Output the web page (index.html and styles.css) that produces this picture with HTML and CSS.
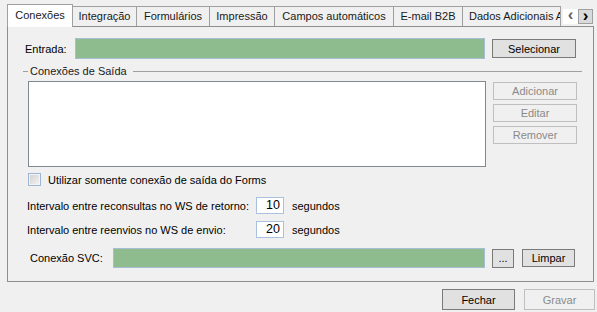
FILE: index.html
```html
<!DOCTYPE html>
<html lang="pt">
<head>
    <meta charset="UTF-8">
    <title>Conexões</title>
    <link rel="stylesheet" href="styles.css">
</head>
<body>
    <div class="window">
        <!-- abas -->
        <div class="tabbar">
            <div class="tab active w-conexoes">Conexões</div>
            <div class="tab w-integracao">Integração</div>
            <div class="tab w-formularios">Formulários</div>
            <div class="tab w-impressao">Impressão</div>
            <div class="tab w-campos">Campos automáticos</div>
            <div class="tab w-email">E-mail B2B</div>
            <div class="tab w-dados">Dados Adicionais A</div>
            <div class="tab-scroll">
                <span class="arrow left">&lsaquo;</span>
                <span class="arrow right">&rsaquo;</span>
            </div>
        </div>

        <div class="panel">
            <div class="row entrada">
                <label class="lbl lbl-entrada">Entrada:</label>
                <div class="field field-entrada"></div>
                <button class="btn btn-side">Selecionar</button>
            </div>

            <div class="group-head">
                <span class="line short"></span>
                <span class="group-title">Conexões de Saída</span>
                <span class="line long"></span>
            </div>

            <div class="row saida">
                <div class="listbox"></div>
                <div class="side-buttons">
                    <button class="btn btn-side disabled">Adicionar</button>
                    <button class="btn btn-side disabled">Editar</button>
                    <button class="btn btn-side disabled">Remover</button>
                </div>
            </div>

            <div class="row check-row">
                <span class="checkbox"></span>
                <span class="check-text">Utilizar somente conexão de saída do Forms</span>
            </div>

            <div class="row interval first">
                <span class="lbl lbl-interval">Intervalo entre reconsultas no WS de retorno:</span>
                <div class="num">10</div>
                <span class="unit">segundos</span>
            </div>
            <div class="row interval">
                <span class="lbl lbl-interval">Intervalo entre reenvios no WS de envio:</span>
                <div class="num">20</div>
                <span class="unit">segundos</span>
            </div>

            <div class="row svc">
                <label class="lbl lbl-svc">Conexão SVC:</label>
                <div class="field field-svc"></div>
                <button class="btn btn-dots">...</button>
                <button class="btn btn-limpar">Limpar</button>
            </div>
        </div>

        <div class="footer">
            <button class="btn btn-footer">Fechar</button>
            <button class="btn btn-footer disabled">Gravar</button>
        </div>
    </div>
</body>
</html>
```

FILE: styles.css
```css
body {
    margin: 0;
    background-color: #f0f0f0;
    font-family: "Liberation Sans", Arial, sans-serif;
    font-size: 11px;
    color: #000;
}

.window {
    width: 597px;
    height: 312px;
    display: flex;
    flex-direction: column;
    overflow: hidden;
}

/* ---- abas ---- */
.tabbar {
    display: flex;
    align-items: flex-end;
    height: 26px;
    padding-left: 7px;
    box-sizing: border-box;
}

.tab {
    box-sizing: border-box;
    height: 20px;
    line-height: 19px;
    text-align: center;
    white-space: nowrap;
    overflow: hidden;
    border: 1px solid #a0a0a0;
    border-left: none;
    border-bottom: none;
    background-color: #f0f0f0;
    color: #1a1a1a;
}

.tab.active {
    position: relative;
    height: 23px;
    line-height: 21px;
    margin-bottom: -1px;
    border-left: 1px solid #a0a0a0;
    background-color: #fff;
    z-index: 1;
}

.w-conexoes { width: 66px; }
.w-integracao { width: 64px; }
.w-formularios { width: 73px; }
.w-impressao { width: 65px; }
.w-campos { width: 119px; }
.w-email { width: 69px; }
.w-dados { width: 98px; text-align: left; padding-left: 6px; }

.tab-scroll {
    display: flex;
    margin-left: 2px;
    margin-bottom: 2px;
}

.arrow {
    box-sizing: border-box;
    width: 15px;
    height: 15px;
    line-height: 12px;
    text-align: center;
    font-size: 17px;
    font-weight: bold;
}

.arrow.left {
    background-color: #fff;
    color: #606060;
}

.arrow.right {
    background-color: #dadada;
    border: 1px solid #a0a0a0;
    color: #000;
}

/* ---- painel ---- */
.panel {
    box-sizing: border-box;
    margin-left: 7px;
    width: 587px;
    height: 256px;
    border: 1px solid #8e8e8e;
    display: flex;
    flex-direction: column;
}

.row {
    display: flex;
    align-items: center;
}

.lbl {
    white-space: nowrap;
}

.field {
    box-sizing: border-box;
    height: 21px;
    background-color: #8fbc8f;
    border: 1px solid #a7bdd4;
}

.btn {
    box-sizing: border-box;
    font-family: inherit;
    font-size: 11px;
    padding: 0;
    background-color: #e1e1e1;
    border: 1px solid #7a7a7a;
    color: #000;
}

.btn.disabled {
    background-color: #f0f0f0;
    border-color: #bfbfbf;
    color: #8a8a8a;
}

.entrada {
    margin-top: 11px;
    padding-left: 17px;
}

.lbl-entrada { width: 50px; }
.field-entrada { width: 410px; }

.btn-side {
    width: 84px;
    height: 19px;
    margin-left: 7px;
}

.group-head {
    display: flex;
    align-items: center;
    margin-top: 5px;
    margin-left: 15px;
    width: 559px;
    height: 14px;
}

.line {
    height: 1px;
    background-color: #a0a0a0;
}

.line.short { width: 5px; }
.line.long { flex: 1; }

.group-title {
    padding: 0 6px 0 2px;
    color: #1a1a1a;
}

.saida {
    align-items: flex-start;
    margin-top: 3px;
    padding-left: 20px;
}

.listbox {
    box-sizing: border-box;
    width: 458px;
    height: 86px;
    background-color: #fff;
    border: 1px solid #828790;
}

.side-buttons {
    display: flex;
    flex-direction: column;
    gap: 4px;
    padding-top: 1px;
}

.side-buttons .btn-side { height: 18px; }

.check-row {
    margin-top: 6px;
    padding-left: 20px;
}

.checkbox {
    box-sizing: border-box;
    width: 13px;
    height: 13px;
    border: 1px solid #9fb6d2;
    background: linear-gradient(135deg, #d0d0d0, #f4f4f4);
    box-shadow: inset 0 0 0 1px #f4f4f4;
}

.check-text {
    margin-left: 7px;
}

.interval {
    margin-top: 6px;
    padding-left: 19px;
}

.interval.first { margin-top: 11px; }
.interval + .interval { margin-top: 7px; }

.lbl-interval { width: 229px; }

.num {
    box-sizing: border-box;
    width: 28px;
    height: 17px;
    background-color: #fff;
    border: 1px solid #a9c1dd;
    text-align: right;
    padding-right: 3px;
    line-height: 15px;
    font-size: 12.5px;
}

.unit {
    margin-left: 8px;
}

.svc {
    margin-top: 10px;
    padding-left: 22px;
}

.lbl-svc { width: 83px; }
.field-svc { width: 372px; height: 20px; }

.btn-dots {
    width: 22px;
    height: 19px;
    margin-left: 7px;
    line-height: 10px;
}

.btn-limpar {
    width: 53px;
    height: 18px;
    margin-left: 8px;
}

/* ---- rodape ---- */
.footer {
    display: flex;
    justify-content: flex-end;
    gap: 9px;
    padding-top: 7px;
    padding-right: 2px;
}

.btn-footer {
    width: 73px;
    height: 21px;
}

.btn-footer.disabled { width: 71px; }
```
